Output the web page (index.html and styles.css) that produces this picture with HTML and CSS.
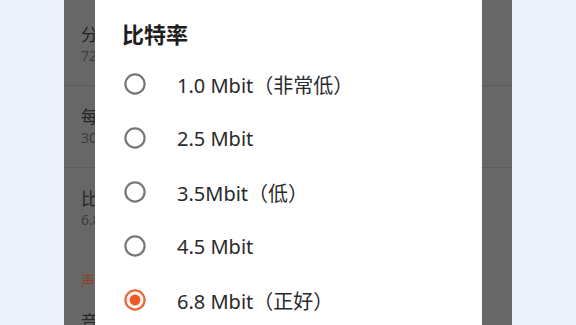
FILE: index.html
```html
<!DOCTYPE html>
<html lang="zh">
<head>
<meta charset="utf-8">
<link rel="stylesheet" href="styles.css">
</head>
<body>
<div class="stage">
  <div class="side"></div>
  <div class="phone">
    <div class="settings">
      <div class="row">
        <div class="row-title">分辨率</div>
        <div class="row-sub">720P</div>
      </div>
      <div class="row">
        <div class="row-title">每秒帧数</div>
        <div class="row-sub">30</div>
      </div>
      <div class="row last">
        <div class="row-title">比特率</div>
        <div class="row-sub">6.8 Mbit</div>
      </div>
      <div class="section">声音</div>
      <div class="row">
        <div class="row-title">音频来源</div>
      </div>
    </div>
    <div class="dialog">
      <div class="dialog-title">比特率</div>
      <div class="options">
        <div class="option">
          <svg class="radio" viewBox="0 0 24 24"><circle cx="12" cy="12" r="9.6" fill="none" stroke="#777" stroke-width="2.2"/></svg>
          <span class="label">1.0 Mbit（非常低）</span>
        </div>
        <div class="option">
          <svg class="radio" viewBox="0 0 24 24"><circle cx="12" cy="12" r="9.6" fill="none" stroke="#777" stroke-width="2.2"/></svg>
          <span class="label">2.5 Mbit</span>
        </div>
        <div class="option">
          <svg class="radio" viewBox="0 0 24 24"><circle cx="12" cy="12" r="9.6" fill="none" stroke="#777" stroke-width="2.2"/></svg>
          <span class="label">3.5Mbit（低）</span>
        </div>
        <div class="option">
          <svg class="radio" viewBox="0 0 24 24"><circle cx="12" cy="12" r="9.6" fill="none" stroke="#777" stroke-width="2.2"/></svg>
          <span class="label">4.5 Mbit</span>
        </div>
        <div class="option">
          <svg class="radio" viewBox="0 0 24 24"><circle cx="12" cy="12" r="9.6" fill="#fdf1ec" stroke="#e2693f" stroke-width="2.2"/><circle cx="12" cy="12" r="5.4" fill="#ec5a25"/></svg>
          <span class="label">6.8 Mbit（正好）</span>
        </div>
      </div>
    </div>
  </div>
  <div class="side"></div>
</div>
</body>
</html>
```

FILE: styles.css
```css
* { box-sizing: border-box; }
html, body {
  margin: 0;
  padding: 0;
  height: 100%;
  overflow: hidden;
}
body {
  background: #edf1f9;
  font-family: "Noto Sans", "Noto Sans CJK SC", sans-serif;
}
.stage {
  display: flex;
  height: 325px;
}
.side {
  flex: 1;
  background: #edf1f9;
}
.phone {
  position: relative;
  width: 448px;
  flex: none;
  background: #676767;
  overflow: hidden;
}
.settings {
  padding-top: 4px;
}
.row {
  padding: 20px 0 19px 17px;
  border-bottom: 1px solid #5b5b5b;
  white-space: nowrap;
}
.row.last {
  border-bottom: none;
}
.row-title,
.row-sub,
.section {
  width: 31px;
  overflow: hidden;
  white-space: nowrap;
}
.row-title {
  width: 14px;
  font-size: 17px;
  line-height: 22px;
  color: #262626;
}
.row-sub {
  width: 14px;
  font-size: 14px;
  line-height: 20px;
  color: #3c3c3c;
}
.section {
  padding: 22px 0 0 17px;
  font-size: 14px;
  line-height: 20px;
  color: #8c4128;
}
.dialog {
  position: absolute;
  top: 0;
  left: 31px;
  width: 387px;
  height: 325px;
  background: #ffffff;
  padding: 18px 0 0 0;
}
.dialog-title {
  padding-left: 27px;
  font-size: 22px;
  line-height: 30px;
  font-weight: 700;
  color: #1e1e1e;
  font-family: "Noto Sans CJK SC", sans-serif;
}
.options {
  margin-top: 9px;
  display: flex;
  flex-direction: column;
}
.option {
  height: 54px;
  display: flex;
  align-items: center;
  padding-left: 28px;
}
.radio {
  width: 24px;
  height: 24px;
  flex: none;
}
.label {
  margin-left: 30px;
  font-size: 20px;
  color: #2a2a2a;
  white-space: nowrap;
}
```
